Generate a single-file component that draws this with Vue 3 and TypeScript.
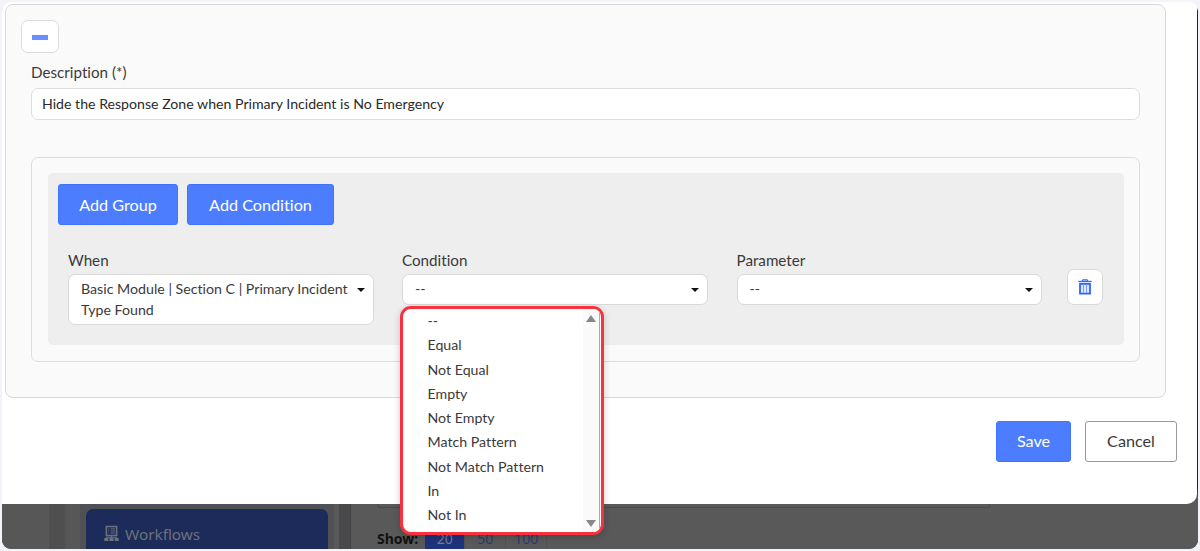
<script setup lang="ts">
const options: string[] = [
  '--',
  'Equal',
  'Not Equal',
  'Empty',
  'Not Empty',
  'Match Pattern',
  'Not Match Pattern',
  'In',
  'Not In',
]
const pageSizes: number[] = [20, 50, 100]
</script>

<template>
  <div class="page">
    <div class="frame">
      <section class="modal">
        <div class="panel">
          <button class="collapse" aria-label="Collapse"><span class="minus"></span></button>
          <label class="label description-label">Description (*)</label>
          <div class="input">Hide the Response Zone when Primary Incident is No Emergency</div>

          <div class="group">
            <div class="rules">
              <div class="toolbar">
                <button class="btn primary add-group">Add Group</button>
                <button class="btn primary add-condition">Add Condition</button>
              </div>
              <div class="fields">
                <div class="field">
                  <label class="label">When</label>
                  <div class="select tall">
                    <span class="value">Basic Module | Section C | Primary Incident<br />Type Found</span>
                    <i class="caret"></i>
                  </div>
                </div>
                <div class="field">
                  <label class="label">Condition</label>
                  <div class="select"><span class="value">--</span><i class="caret"></i></div>
                </div>
                <div class="field">
                  <label class="label">Parameter</label>
                  <div class="select"><span class="value">--</span><i class="caret"></i></div>
                </div>
                <button class="trash" aria-label="Delete">
                  <svg width="14" height="16" viewBox="0 0 14 16" fill="none" stroke="#2b66ff">
                    <path d="M.3 2.5h13.400" stroke-width="1.300" />
                    <path d="M4 1.700 5 .9h4l1 .8" stroke-width="1.200" />
                    <path d="M2 4.900h10v9.700H2z" fill="#dfe7ff" stroke-width="1.800" />
                    <path d="M5.500 5.500v8.500M8.500 5.500v8.500" stroke="#7d9fff" stroke-width="1" />
                  </svg>
                </button>
              </div>
            </div>
          </div>
        </div>
        <footer class="actions">
          <button class="btn primary save">Save</button>
          <button class="btn cancel">Cancel</button>
        </footer>
      </section>

      <div class="backdrop">
        <div class="rail"></div>
        <div class="gutter"></div>
        <div class="sidebar">
          <div class="nav-item">
            <svg width="15" height="17" viewBox="0 0 16 17" fill="none" stroke="#6c717d">
              <path d="M2.500 1h11v9.500h-11z" stroke-width="1.600" />
              <path d="M4.500 3.500h1M7 3.500h5M4.500 5.800h1M7 5.800h5M4.500 8h1M7 8h5" />
              <path d="M8 10.500v3M2.500 14v-1.500h11V14" />
              <path d="M.3 13.200h4.400v3.300H.3zM5.800 13.200h4.400v3.300H5.800zM11.300 13.200h4.400v3.300h-4.400z" fill="#6c717d" stroke="none" />
            </svg>
            <span>Workflows</span>
          </div>
        </div>
        <div class="divider"></div>
        <div class="content">
          <div class="table-edge"></div>
          <div class="pager">
            <b>Show:</b>
            <div class="sizes">
              <span v-for="n in pageSizes" :key="n" :class="{ active: n === 20 }">{{ n }}</span>
            </div>
          </div>
        </div>
      </div>
    </div>

    <div class="menu">
      <ul>
        <li v-for="o in options" :key="o">{{ o }}</li>
      </ul>
      <div class="scroll"><i class="up"></i><i class="down"></i></div>
    </div>
  </div>
</template>

<style>
html,
body {
  margin: 0;
  overflow: hidden;
}
</style>

<style scoped>
* {
  box-sizing: border-box;
}
.page {
  position: relative;
  width: 1200px;
  height: 551px;
  padding: 2px;
  background: #f3f3fa;
  font-family: Lato, sans-serif;
  font-variant-ligatures: none;
  color: #3a3a3a;
}
.frame {
  height: 547px;
  width: 1196px;
  border-radius: 9px;
  overflow: hidden;
  background: linear-gradient(#fff 0 5px, #222 9px 485px, #595959 495px);
}
button {
  font-family: inherit;
  font-variant-ligatures: inherit;
  padding: 0;
  margin: 0;
}
.modal {
  width: 1195px;
  height: 502px;
  padding: 2px 0 0 3px;
  background: #fff;
  border-radius: 0 0 10px 0;
}
.panel {
  width: 1161px;
  height: 394px;
  padding: 15px 25px 0;
  background: #fafafa;
  border: 1px solid #d9d9d9;
  border-radius: 8px;
}
.collapse {
  display: flex;
  align-items: center;
  justify-content: center;
  width: 38px;
  height: 33px;
  margin-left: -10px;
  background: #fff;
  border: 1px solid #ddd;
  border-radius: 7px;
}
.minus {
  width: 16px;
  height: 5px;
  margin-top: 1px;
  background: #688fff;
}
.label {
  display: block;
  height: 20px;
  font-size: 15.2px;
  line-height: 20px;
  white-space: nowrap;
}
.description-label {
  margin: 9px 0 6px;
}
.input {
  display: flex;
  align-items: center;
  width: 1109px;
  height: 32px;
  padding: 0 0 1px 10px;
  background: #fff;
  border: 1px solid #ddd;
  border-radius: 7px;
  font-size: 14.15px;
  color: #2a2a2a;
}
.group {
  width: 1109px;
  height: 205px;
  margin-top: 37px;
  padding: 15px 16px;
  border: 1px solid #ddd;
  border-radius: 7px;
}
.rules {
  width: 1076px;
  height: 172px;
  padding: 11px 10px 0;
  background: #eee;
  border-radius: 5px;
}
.toolbar {
  display: flex;
  gap: 9px;
}
.btn {
  height: 41px;
  border: 1px solid #3f74ff;
  border-radius: 3px;
  font-size: 16.2px;
}
.primary {
  background: #4d7dff;
  color: #fff;
}
.add-group {
  width: 120px;
}
.add-condition {
  width: 147px;
}
.fields {
  display: flex;
  gap: 28px;
  margin: 25px 0 0 10px;
}
.field {
  width: 306px;
}
.field:nth-child(3) {
  padding-left: 0.5px;
}
.select {
  position: relative;
  height: 31px;
  margin-top: 4px;
  padding: 4px 12px;
  background: #fff;
  border: 1px solid #d9d9d9;
  border-radius: 7px;
  font-size: 14.2px;
  line-height: 20.5px;
  white-space: nowrap;
}
.tall {
  height: 51px;
}
.caret {
  position: absolute;
  right: 8px;
  top: 13px;
  border: 4px solid transparent;
  border-top-color: #111;
  border-bottom: 0;
}
.trash {
  display: flex;
  align-items: center;
  justify-content: center;
  width: 36px;
  height: 36px;
  margin: 19px 0 0 -3px;
  background: #fff;
  border: 1px solid #d9d9d9;
  border-radius: 7px;
}
.actions {
  display: flex;
  justify-content: flex-end;
  gap: 14px;
  margin-top: 23px;
  padding-right: 20px;
}
.actions .btn {
  height: 41px;
  padding-bottom: 2px;
}
.save {
  width: 75px;
}
.cancel {
  width: 92px;
  background: #fff;
  border-color: #999;
  color: #3a3a3a;
}
.backdrop {
  display: flex;
  height: 45px;
  font-family: 'Noto Sans', sans-serif;
}
.rail {
  width: 47px;
  background: #575757;
}
.gutter {
  width: 31px;
  background: linear-gradient(90deg, #4f4f4f 0 15px, #575757 17px);
}
.sidebar {
  width: 254px;
  padding: 5px 5px 0 6px;
  background: #505154;
}
.nav-item {
  display: flex;
  align-items: center;
  gap: 6px;
  width: 242px;
  height: 49px;
  padding-left: 18px;
  background: #1c2b59;
  border-radius: 7px 7px 0 0;
  color: #6c717d;
  font-size: 15.3px;
}
.divider {
  width: 17px;
  background: linear-gradient(90deg, #595959 0 5px, #49494b 5px 16px, #424242 16px);
}
.content {
  flex: 1;
  padding-left: 26px;
  background: #595959;
  font-size: 14px;
  line-height: 22px;
  color: #111;
}
.table-edge {
  width: 613px;
  height: 4px;
  border: 1px solid #4c4c4c;
  border-top: 0;
  border-radius: 0 0 0 4px;
}
.pager {
  display: flex;
  padding-top: 20px;
}
.sizes {
  display: flex;
  margin-left: 7px;
}
.sizes span {
  width: 41px;
  text-align: center;
  color: #2c3a70;
  border-right: 1px solid #525252;
}
.sizes .active {
  width: 40px;
  background: #1f327c;
  color: #777c8b;
}
.menu {
  position: absolute;
  left: 400px;
  top: 306px;
  display: flex;
  width: 204px;
  height: 229px;
  background: #fff;
  border: 3px solid #f8333f;
  border-radius: 11px;
  box-shadow: 0 2px 7px rgba(0, 0, 0, 0.2);
  overflow: hidden;
}
.menu ul {
  flex: 1;
  margin: 0;
  padding: 0 0 0 24.5px;
  list-style: none;
  font-size: 14.2px;
  line-height: 24.3px;
}
.menu li {
  height: 24.3px;
  white-space: nowrap;
}
.scroll {
  display: flex;
  flex-direction: column;
  justify-content: space-between;
  width: 17px;
  margin-right: 1px;
  padding: 6px 0 5px 3px;
  background: #fafafa;
  border-right: 1px solid #aaa;
}
.up,
.down {
  width: 0;
  border: 5px solid transparent;
}
.up {
  border-bottom: 7px solid #888;
  border-top: 0;
}
.down {
  border-top: 7px solid #888;
  border-bottom: 0;
}
</style>
